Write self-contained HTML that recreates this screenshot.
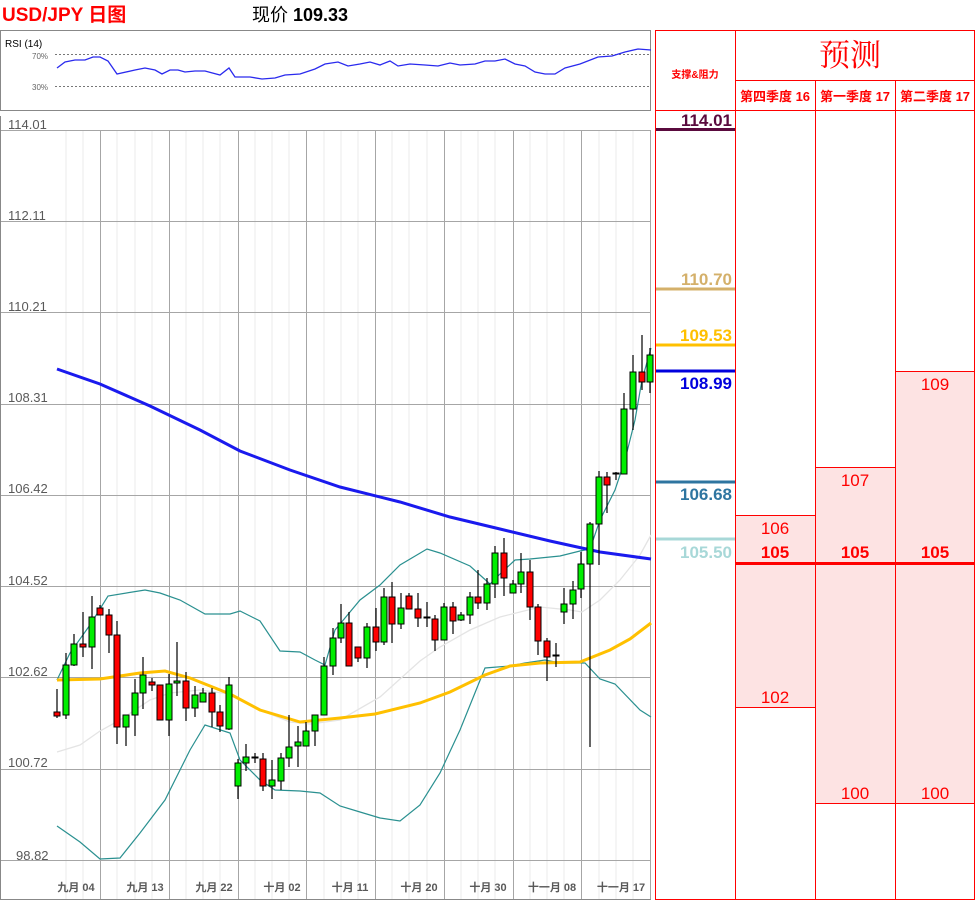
<!DOCTYPE html>
<html><head><meta charset="utf-8"><style>
body{margin:0;background:#fff;width:975px;height:900px;overflow:hidden}
svg{display:block}
text{font-family:"Liberation Sans","Noto Sans CJK SC",sans-serif}
</style></head><body>
<svg width="975" height="900" viewBox="0 0 975 900" xmlns="http://www.w3.org/2000/svg">
<!-- header -->
<text x="2" y="21" font-size="19" font-weight="bold" fill="#ff0000">USD/JPY 日图</text>
<text x="252" y="21" font-size="18" fill="#000">现价 <tspan font-weight="bold">109.33</tspan></text>

<!-- RSI panel -->
<rect x="0.5" y="30.5" width="650" height="80" fill="#fff" stroke="#888"/>
<text x="5" y="47" font-size="10" fill="#000">RSI (14)</text>
<text x="32" y="59" font-size="8" fill="#666">70%</text>
<text x="32" y="90" font-size="8" fill="#666">30%</text>
<line x1="55" y1="54.5" x2="650" y2="54.5" stroke="#777" stroke-dasharray="2,2"/>
<line x1="55" y1="86.5" x2="650" y2="86.5" stroke="#777" stroke-dasharray="2,2"/>
<polyline fill="none" stroke="#2a2aee" stroke-width="1.3" points="57,68 65,62 75,60 85,60 93,57 100,57 108,61 117,74 135,70 145,68 155,70 162,74 170,70 178,70 185,72 195,71 205,71 220,75 229,68 235,77 250,77 262,79 275,78 285,75 300,74 315,69 325,64 338,62 348,66 360,64 370,62 380,65 390,61 398,66 410,64 425,65 438,66 450,63 460,65 475,64 485,61 495,61 505,59 515,64 525,66 535,72 545,74 555,74 565,68 580,64 598,57 612,56 625,52 638,49 651,50"/>

<!-- main chart -->
<line x1="0.5" y1="116" x2="0.5" y2="900" stroke="#888"/>
<line x1="0" y1="899.5" x2="651" y2="899.5" stroke="#888"/>
<g stroke="#ebebeb" stroke-width="1">
<line x1="66" y1="130" x2="66" y2="899"/><line x1="83" y1="130" x2="83" y2="899"/><line x1="117" y1="130" x2="117" y2="899"/><line x1="135" y1="130" x2="135" y2="899"/><line x1="152" y1="130" x2="152" y2="899"/><line x1="186" y1="130" x2="186" y2="899"/><line x1="203" y1="130" x2="203" y2="899"/><line x1="220" y1="130" x2="220" y2="899"/><line x1="255" y1="130" x2="255" y2="899"/><line x1="272" y1="130" x2="272" y2="899"/><line x1="289" y1="130" x2="289" y2="899"/><line x1="324" y1="130" x2="324" y2="899"/><line x1="341" y1="130" x2="341" y2="899"/><line x1="358" y1="130" x2="358" y2="899"/><line x1="392" y1="130" x2="392" y2="899"/><line x1="409" y1="130" x2="409" y2="899"/><line x1="427" y1="130" x2="427" y2="899"/><line x1="461" y1="130" x2="461" y2="899"/><line x1="478" y1="130" x2="478" y2="899"/><line x1="495" y1="130" x2="495" y2="899"/><line x1="530" y1="130" x2="530" y2="899"/><line x1="547" y1="130" x2="547" y2="899"/><line x1="564" y1="130" x2="564" y2="899"/><line x1="599" y1="130" x2="599" y2="899"/><line x1="616" y1="130" x2="616" y2="899"/><line x1="633" y1="130" x2="633" y2="899"/>
</g>
<g stroke="#a6a6a6" stroke-width="1">
<line x1="100.5" y1="130" x2="100.5" y2="899"/><line x1="169.5" y1="130" x2="169.5" y2="899"/><line x1="238.5" y1="130" x2="238.5" y2="899"/><line x1="306.5" y1="130" x2="306.5" y2="899"/><line x1="375.5" y1="130" x2="375.5" y2="899"/><line x1="444.5" y1="130" x2="444.5" y2="899"/><line x1="513.5" y1="130" x2="513.5" y2="899"/><line x1="581.5" y1="130" x2="581.5" y2="899"/><line x1="650.5" y1="130" x2="650.5" y2="899"/>
<line x1="1" y1="130.5" x2="651" y2="130.5"/><line x1="1" y1="221.5" x2="651" y2="221.5"/><line x1="1" y1="312.5" x2="651" y2="312.5"/><line x1="1" y1="404.5" x2="651" y2="404.5"/><line x1="1" y1="495.5" x2="651" y2="495.5"/><line x1="1" y1="586.5" x2="651" y2="586.5"/><line x1="1" y1="677.5" x2="651" y2="677.5"/><line x1="1" y1="769.5" x2="651" y2="769.5"/><line x1="1" y1="860.5" x2="651" y2="860.5"/>
</g>
<g font-size="13" fill="#595959">
<text x="8" y="129">114.01</text><text x="8" y="220">112.11</text><text x="8" y="311">110.21</text><text x="8" y="402">108.31</text><text x="8" y="493">106.42</text><text x="8" y="585">104.52</text><text x="8" y="676">102.62</text><text x="8" y="767">100.72</text><text x="16" y="860">98.82</text>
</g>
<g font-size="11" font-weight="bold" fill="#595959" text-anchor="middle">
<text x="76" y="891">九月 04</text><text x="145" y="891">九月 13</text><text x="214" y="891">九月 22</text><text x="282" y="891">十月 02</text><text x="350" y="891">十月 11</text><text x="419" y="891">十月 20</text><text x="488" y="891">十月 30</text><text x="552" y="891">十一月 08</text><text x="621" y="891">十一月 17</text>
</g>

<!-- bands -->
<polyline fill="none" stroke="#e4e4e4" stroke-width="1.3" points="57,752 80,745 100,731 120,720 150,700 170,693 200,690 230,694 260,710 290,722 310,724 340,720 380,697 420,661 440,647 470,630 500,617 540,607 570,610 582,612 600,600 620,580 640,555 651,535"/>
<polyline fill="none" stroke="#2a9090" stroke-width="1.2" points="57,680 70,653 90,625 108,596 145,590 160,593 180,600 205,614 230,614 240,611 260,621 280,651 300,652 315,660 325,665 335,630 360,600 380,585 400,565 427,549 440,553 470,566 490,584 500,574 515,560 530,559 560,556 580,551 590,549 600,520 615,490 625,460 635,420 642,380 651,348"/>
<polyline fill="none" stroke="#2a9090" stroke-width="1.2" points="57,826 80,842 100,859 120,858 140,833 165,800 190,750 205,725 230,733 240,760 260,780 275,790 300,791 320,793 340,806 360,812 380,818 400,821 420,805 440,773 460,730 485,668 510,666 525,663 545,660 560,663 585,663 600,679 615,684 640,710 651,717"/>
<polyline fill="none" stroke="#ffc000" stroke-width="3" points="57,680 100,679 140,673 165,671 190,678 230,694 260,710 300,722 340,718 375,714 420,703 450,692 485,675 510,666 540,663 580,662 610,650 630,639 651,623"/>
<polyline fill="none" stroke="#1a1aee" stroke-width="3" points="57,369 100,384 150,406 200,430 240,451 290,470 340,487 400,502 450,517 500,529 550,541 600,552 651,559"/>

<!-- candles -->
<g stroke="#000" stroke-width="1.2">
<line x1="57" y1="689" x2="57" y2="718"/><line x1="66" y1="653" x2="66" y2="719"/><line x1="74" y1="634" x2="74" y2="666"/><line x1="83" y1="612" x2="83" y2="657"/><line x1="92" y1="596" x2="92" y2="669"/><line x1="100" y1="605" x2="100" y2="615"/><line x1="109" y1="609" x2="109" y2="653"/><line x1="117" y1="621" x2="117" y2="744"/><line x1="126" y1="715" x2="126" y2="746"/><line x1="135" y1="679" x2="135" y2="736"/><line x1="143" y1="657" x2="143" y2="709"/><line x1="152" y1="678" x2="152" y2="691"/><line x1="160" y1="685" x2="160" y2="720"/><line x1="169" y1="674" x2="169" y2="736"/><line x1="177" y1="642" x2="177" y2="696"/><line x1="186" y1="672" x2="186" y2="721"/><line x1="195" y1="686" x2="195" y2="717"/><line x1="203" y1="688" x2="203" y2="702"/><line x1="212" y1="688" x2="212" y2="727"/><line x1="220" y1="705" x2="220" y2="732"/><line x1="229" y1="677" x2="229" y2="730"/><line x1="238" y1="759" x2="238" y2="799"/><line x1="246" y1="744" x2="246" y2="771"/><line x1="255" y1="753" x2="255" y2="763"/><line x1="263" y1="753" x2="263" y2="791"/><line x1="272" y1="760" x2="272" y2="799"/><line x1="281" y1="753" x2="281" y2="790"/><line x1="289" y1="715" x2="289" y2="767"/><line x1="298" y1="726" x2="298" y2="767"/><line x1="306" y1="722" x2="306" y2="746"/><line x1="315" y1="715" x2="315" y2="746"/><line x1="324" y1="657" x2="324" y2="715"/><line x1="333" y1="628" x2="333" y2="675"/><line x1="341" y1="604" x2="341" y2="643"/><line x1="349" y1="612" x2="349" y2="666"/><line x1="358" y1="647" x2="358" y2="662"/><line x1="367" y1="623" x2="367" y2="668"/><line x1="376" y1="608" x2="376" y2="651"/><line x1="384" y1="588" x2="384" y2="645"/><line x1="392" y1="582" x2="392" y2="643"/><line x1="401" y1="593" x2="401" y2="629"/><line x1="409" y1="593" x2="409" y2="609"/><line x1="418" y1="593" x2="418" y2="627"/><line x1="427" y1="602" x2="427" y2="627"/><line x1="435" y1="615" x2="435" y2="651"/><line x1="444" y1="603" x2="444" y2="640"/><line x1="453" y1="602" x2="453" y2="634"/><line x1="461" y1="612" x2="461" y2="621"/><line x1="470" y1="592" x2="470" y2="624"/><line x1="478" y1="570" x2="478" y2="609"/><line x1="487" y1="578" x2="487" y2="610"/><line x1="495" y1="546" x2="495" y2="598"/><line x1="504" y1="538" x2="504" y2="596"/><line x1="513" y1="580" x2="513" y2="593"/><line x1="521" y1="553" x2="521" y2="593"/><line x1="530" y1="560" x2="530" y2="620"/><line x1="538" y1="604" x2="538" y2="655"/><line x1="547" y1="638" x2="547" y2="681"/><line x1="556" y1="643" x2="556" y2="667"/><line x1="564" y1="588" x2="564" y2="624"/><line x1="573" y1="581" x2="573" y2="619"/><line x1="581" y1="552" x2="581" y2="598"/><line x1="590" y1="522" x2="590" y2="747"/><line x1="599" y1="471" x2="599" y2="565"/><line x1="607" y1="472" x2="607" y2="513"/><line x1="616" y1="472" x2="616" y2="480"/><line x1="624" y1="393" x2="624" y2="474"/><line x1="633" y1="355" x2="633" y2="430"/><line x1="642" y1="335" x2="642" y2="390"/><line x1="650" y1="348" x2="650" y2="393"/>
</g>
<g stroke="#000" stroke-width="1">
<rect x="54" y="712" width="6" height="4" fill="#f00"/><rect x="63" y="665" width="6" height="50" fill="#0e0"/><rect x="71" y="644" width="6" height="21" fill="#0e0"/><rect x="80" y="644" width="6" height="3" fill="#f00"/><rect x="89" y="617" width="6" height="30" fill="#0e0"/><rect x="97" y="608" width="6" height="7" fill="#f00"/><rect x="106" y="615" width="6" height="20" fill="#f00"/><rect x="114" y="635" width="6" height="92" fill="#f00"/><rect x="123" y="715" width="6" height="12" fill="#0e0"/><rect x="132" y="693" width="6" height="22" fill="#0e0"/><rect x="140" y="675" width="6" height="18" fill="#0e0"/><rect x="149" y="682" width="6" height="3" fill="#f00"/><rect x="157" y="685" width="6" height="35" fill="#f00"/><rect x="166" y="684" width="6" height="36" fill="#0e0"/><rect x="174" y="681" width="6" height="2" fill="#0e0"/><rect x="183" y="681" width="6" height="27" fill="#f00"/><rect x="192" y="695" width="6" height="13" fill="#0e0"/><rect x="200" y="693" width="6" height="9" fill="#0e0"/><rect x="209" y="693" width="6" height="19" fill="#f00"/><rect x="217" y="712" width="6" height="14" fill="#f00"/><rect x="226" y="685" width="6" height="44" fill="#0e0"/><rect x="235" y="763" width="6" height="23" fill="#0e0"/><rect x="243" y="757" width="6" height="6" fill="#0e0"/><rect x="252" y="757" width="6" height="1" fill="#000"/><rect x="260" y="759" width="6" height="27" fill="#f00"/><rect x="269" y="780" width="6" height="6" fill="#0e0"/><rect x="278" y="758" width="6" height="23" fill="#0e0"/><rect x="286" y="747" width="6" height="11" fill="#0e0"/><rect x="295" y="742" width="6" height="4" fill="#0e0"/><rect x="303" y="731" width="6" height="15" fill="#0e0"/><rect x="312" y="715" width="6" height="16" fill="#0e0"/><rect x="321" y="666" width="6" height="49" fill="#0e0"/><rect x="330" y="638" width="6" height="28" fill="#0e0"/><rect x="338" y="623" width="6" height="15" fill="#0e0"/><rect x="346" y="623" width="6" height="43" fill="#f00"/><rect x="355" y="647" width="6" height="11" fill="#f00"/><rect x="364" y="627" width="6" height="31" fill="#0e0"/><rect x="373" y="627" width="6" height="15" fill="#f00"/><rect x="381" y="597" width="6" height="45" fill="#0e0"/><rect x="389" y="597" width="6" height="27" fill="#f00"/><rect x="398" y="608" width="6" height="16" fill="#0e0"/><rect x="406" y="596" width="6" height="13" fill="#f00"/><rect x="415" y="609" width="6" height="9" fill="#f00"/><rect x="424" y="617" width="6" height="1" fill="#000"/><rect x="432" y="619" width="6" height="21" fill="#f00"/><rect x="441" y="607" width="6" height="33" fill="#0e0"/><rect x="450" y="607" width="6" height="14" fill="#f00"/><rect x="458" y="615" width="6" height="5" fill="#0e0"/><rect x="467" y="597" width="6" height="18" fill="#0e0"/><rect x="475" y="597" width="6" height="6" fill="#f00"/><rect x="484" y="584" width="6" height="19" fill="#0e0"/><rect x="492" y="553" width="6" height="31" fill="#0e0"/><rect x="501" y="553" width="6" height="25" fill="#f00"/><rect x="510" y="584" width="6" height="9" fill="#0e0"/><rect x="518" y="572" width="6" height="12" fill="#0e0"/><rect x="527" y="572" width="6" height="35" fill="#f00"/><rect x="535" y="607" width="6" height="34" fill="#f00"/><rect x="544" y="641" width="6" height="16" fill="#f00"/><rect x="553" y="655" width="6" height="1" fill="#000"/><rect x="561" y="604" width="6" height="8" fill="#0e0"/><rect x="570" y="590" width="6" height="14" fill="#0e0"/><rect x="578" y="564" width="6" height="25" fill="#0e0"/><rect x="587" y="524" width="6" height="40" fill="#0e0"/><rect x="596" y="477" width="6" height="47" fill="#0e0"/><rect x="604" y="477" width="6" height="8" fill="#f00"/><rect x="613" y="473" width="6" height="1" fill="#000"/><rect x="621" y="409" width="6" height="65" fill="#0e0"/><rect x="630" y="372" width="6" height="37" fill="#0e0"/><rect x="639" y="372" width="6" height="10" fill="#f00"/><rect x="647" y="355" width="6" height="27" fill="#0e0"/>
</g>

<!-- table -->
<rect x="735" y="515" width="80" height="192" fill="#fde3e3"/>
<rect x="815" y="467" width="80" height="336" fill="#fde3e3"/>
<rect x="895" y="371" width="80" height="432" fill="#fde3e3"/>
<g stroke="#ff0000" stroke-width="1" fill="none">
<line x1="655.5" y1="30" x2="655.5" y2="900"/>
<line x1="735.5" y1="30" x2="735.5" y2="900"/>
<line x1="815.5" y1="80" x2="815.5" y2="900"/>
<line x1="895.5" y1="80" x2="895.5" y2="900"/>
<line x1="974.5" y1="30" x2="974.5" y2="900"/>
<line x1="655" y1="30.5" x2="975" y2="30.5"/>
<line x1="735" y1="80.5" x2="975" y2="80.5"/>
<line x1="655" y1="110.5" x2="975" y2="110.5"/>
<line x1="655" y1="899.5" x2="975" y2="899.5"/>
<line x1="735" y1="515.5" x2="815" y2="515.5"/><line x1="735" y1="707.5" x2="815" y2="707.5"/>
<line x1="815" y1="467.5" x2="895" y2="467.5"/><line x1="815" y1="803.5" x2="975" y2="803.5"/>
<line x1="895" y1="371.5" x2="975" y2="371.5"/>
</g>
<line x1="735" y1="563.5" x2="975" y2="563.5" stroke="#ff0000" stroke-width="3"/>
<text x="850" y="66" font-size="31" fill="#ff0000" text-anchor="middle" style="font-family:'Noto Serif CJK SC',serif">预测</text>
<text x="695" y="78" font-size="10" font-weight="bold" fill="#ff0000" text-anchor="middle">支撑&amp;阻力</text>
<g font-size="13" font-weight="bold" fill="#ff0000" text-anchor="middle">
<text x="775" y="101">第四季度 16</text><text x="855" y="101">第一季度 17</text><text x="935" y="101">第二季度 17</text>
</g>
<!-- support lines -->
<line x1="656" y1="129.5" x2="735" y2="129.5" stroke="#5a0a3e" stroke-width="3"/>
<line x1="656" y1="289" x2="735" y2="289" stroke="#d4b06a" stroke-width="3"/>
<line x1="656" y1="345" x2="735" y2="345" stroke="#ffc000" stroke-width="3"/>
<line x1="656" y1="371" x2="735" y2="371" stroke="#0000dd" stroke-width="3"/>
<line x1="656" y1="482" x2="735" y2="482" stroke="#2e75a0" stroke-width="3"/>
<line x1="656" y1="539" x2="735" y2="539" stroke="#a8d8d8" stroke-width="3"/>
<g font-size="17" font-weight="bold" text-anchor="end">
<text x="732" y="126" fill="#5a0a3e">114.01</text>
<text x="732" y="285" fill="#d4b06a">110.70</text>
<text x="732" y="341" fill="#ffc000">109.53</text>
<text x="732" y="389" fill="#0000dd">108.99</text>
<text x="732" y="500" fill="#2e75a0">106.68</text>
<text x="732" y="558" fill="#a8d8d8">105.50</text>
</g>
<g font-size="17" fill="#ff0000" text-anchor="middle">
<text x="775" y="534">106</text><text x="775" y="703">102</text>
<text x="855" y="486">107</text><text x="855" y="799">100</text>
<text x="935" y="390">109</text><text x="935" y="799">100</text>
<g font-weight="bold"><text x="775" y="558">105</text><text x="855" y="558">105</text><text x="935" y="558">105</text></g>
</g>
</svg>
</body></html>
